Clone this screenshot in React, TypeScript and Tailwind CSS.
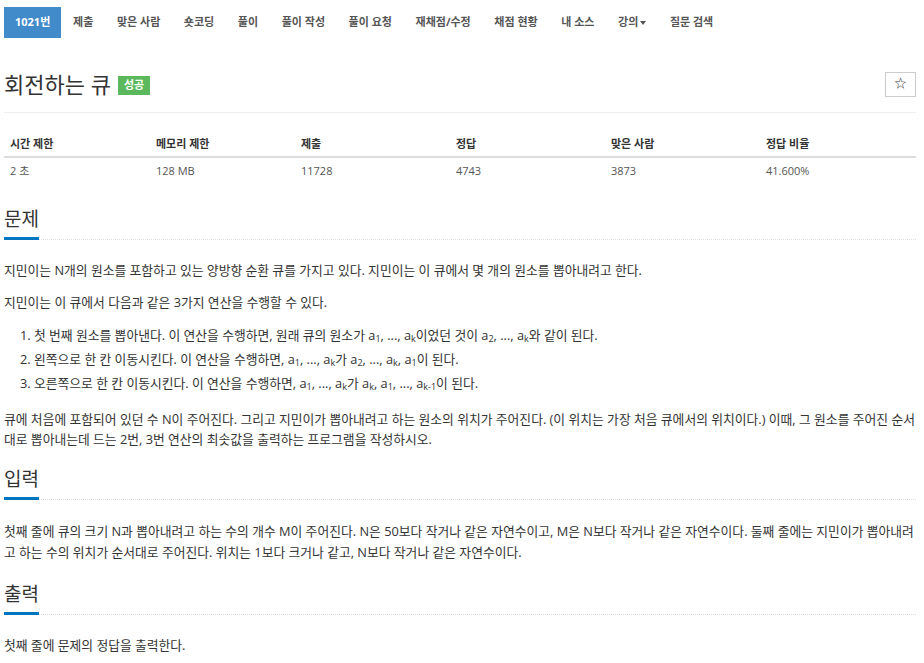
import React from "react";

const FONT = { fontFamily: '"Open Sans", "Noto Sans CJK KR", sans-serif' };

const navItems = [
  "제출",
  "맞은 사람",
  "숏코딩",
  "풀이",
  "풀이 작성",
  "풀이 요청",
  "재채점/수정",
  "채점 현황",
  "내 소스",
];

const stats = [
  { head: "시간 제한", value: "2 초", w: "w-[146px]" },
  { head: "메모리 제한", value: "128 MB", w: "w-[145px]" },
  { head: "제출", value: "11728", w: "w-[155px]" },
  { head: "정답", value: "4743", w: "w-[155px]" },
  { head: "맞은 사람", value: "3873", w: "w-[155px]" },
  { head: "정답 비율", value: "41.600%", w: "" },
];

function SectionHead({ title }: { title: string }) {
  return (
    <div className="flex w-[912px] border-b border-dotted border-[#ddd]">
      <h2 className="text-[19px] leading-[26px] text-[#333] pb-[5px] border-b-[3px] border-[#0076c0] -mb-px font-normal">
        {title}
      </h2>
    </div>
  );
}

function A({ i }: { i: string }) {
  return (
    <>
      a<sub className="text-[9px]">{i}</sub>
    </>
  );
}

export default function App() {
  return (
    <div className="bg-white min-h-screen text-[#333] px-[4px] pt-[7px]" style={FONT}>
      <nav className="flex items-center h-[31px] text-[11px] font-bold">
        <span className="h-full flex items-center px-[11px] bg-[#428bca] text-white">1021번</span>
        {navItems.map((n) => (
          <span key={n} className="h-full flex items-center px-[11.8px] text-[#555]">
            {n}
          </span>
        ))}
        <span className="h-full flex items-center px-[11.8px] text-[#555]">
          강의
          <span className="ml-[2px] inline-block w-0 h-0 border-x-[3.5px] border-x-transparent border-t-[4px] border-t-[#555]" />
        </span>
        <span className="h-full flex items-center px-[11.8px] text-[#555]">질문 검색</span>
      </nav>

      <div className="mt-[30px] w-[912px] flex items-center justify-between border-b border-[#eee] pb-[12px]">
        <div className="flex items-center">
          <h1 className="text-[22px] leading-[32px] font-normal text-[#333]">회전하는 큐</h1>
          <span className="ml-[7px] mt-[2px] bg-[#5cb85c] text-white text-[11px] font-bold px-[6px] h-[19px] flex items-center">
            성공
          </span>
        </div>
        <button className="w-[31px] h-[25px] border border-[#ccc] flex items-center justify-center text-[12px] text-[#333]">
          ☆
        </button>
      </div>

      <table className="mt-[16px] w-[912px] text-[11px] border-collapse">
        <thead>
          <tr className="border-b-2 border-[#ddd]">
            {stats.map((s) => (
              <th key={s.head} className={`${s.w} text-left font-bold px-[6px] pt-[3px] h-[28px]`}>
                {s.head}
              </th>
            ))}
          </tr>
        </thead>
        <tbody>
          <tr>
            {stats.map((s) => (
              <td key={s.head} className="px-[6px] h-[28px] text-[#555]">
                {s.value}
              </td>
            ))}
          </tr>
        </tbody>
      </table>

      <div className="mt-[21px] w-[916px]">
        <SectionHead title="문제" />
        <div className="mt-[20px] text-[12.8px] leading-[21px]">
          <p className="mb-[11px]">
            지민이는 N개의 원소를 포함하고 있는 양방향 순환 큐를 가지고 있다. 지민이는 이 큐에서 몇 개의 원소를 뽑아내려고 한다.
          </p>
          <p className="mb-[10px]">지민이는 이 큐에서 다음과 같은 3가지 연산을 수행할 수 있다.</p>
          <ol className="list-decimal pl-[30px] mb-[14px]">
            <li className="leading-[24px]">
              첫 번째 원소를 뽑아낸다. 이 연산을 수행하면, 원래 큐의 원소가 <A i="1" />, ..., <A i="k" />이었던 것이{" "}
              <A i="2" />, ..., <A i="k" />와 같이 된다.
            </li>
            <li className="leading-[24px]">
              왼쪽으로 한 칸 이동시킨다. 이 연산을 수행하면, <A i="1" />, ..., <A i="k" />가 <A i="2" />, ...,{" "}
              <A i="k" />, <A i="1" />이 된다.
            </li>
            <li className="leading-[24px]">
              오른쪽으로 한 칸 이동시킨다. 이 연산을 수행하면, <A i="1" />, ..., <A i="k" />가 <A i="k" />,{" "}
              <A i="1" />, ..., <A i="k-1" />이 된다.
            </li>
          </ol>
          <p className="leading-[20px]">
            큐에 처음에 포함되어 있던 수 N이 주어진다. 그리고 지민이가 뽑아내려고 하는 원소의 위치가 주어진다. (이 위치는 가장 처음 큐에서의 위치이다.) 이때, 그 원소를 주어진 순서대로 뽑아내는데 드는 2번, 3번 연산의 최솟값을 출력하는 프로그램을 작성하시오.
          </p>
        </div>

        <div className="mt-[17px]">
          <SectionHead title="입력" />
        </div>
        <p className="mt-[21px] text-[12.8px] leading-[21px]">
          첫째 줄에 큐의 크기 N과 뽑아내려고 하는 수의 개수 M이 주어진다. N은 50보다 작거나 같은 자연수이고, M은 N보다 작거나 같은 자연수이다. 둘째 줄에는 지민이가 뽑아내려고 하는 수의 위치가 순서대로 주어진다. 위치는 1보다 크거나 같고, N보다 작거나 같은 자연수이다.
        </p>

        <div className="mt-[18px]">
          <SectionHead title="출력" />
        </div>
        <p className="mt-[20px] text-[12.8px] leading-[21px]">첫째 줄에 문제의 정답을 출력한다.</p>
      </div>
    </div>
  );
}
